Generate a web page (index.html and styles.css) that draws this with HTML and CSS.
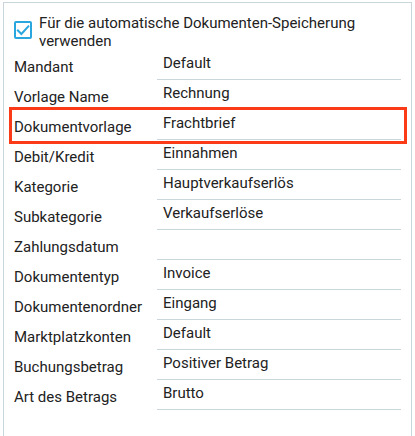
FILE: index.html
```html
<!DOCTYPE html>
<html lang="de">
<head>
<meta charset="utf-8">
<link rel="stylesheet" href="styles.css">
</head>
<body>
<div class="panel">
  <div class="check-row">
    <span class="checkbox">
      <svg width="14" height="14" viewBox="0 0 14 14"><path d="M1.2 6.8 L5.4 11 L13 2.6" fill="none" stroke="#2aa6df" stroke-width="2"/></svg>
    </span>
    <span class="check-label">Für die automatische Dokumenten-Speicherung verwenden</span>
  </div>
  <div class="rows">
    <div class="row"><div class="label">Mandant</div><div class="value">Default</div></div>
    <div class="row"><div class="label">Vorlage Name</div><div class="value">Rechnung</div></div>
    <div class="row highlighted"><div class="label">Dokumentvorlage</div><div class="value">Frachtbrief</div><div class="mark"></div></div>
    <div class="row"><div class="label">Debit/Kredit</div><div class="value">Einnahmen</div></div>
    <div class="row"><div class="label">Kategorie</div><div class="value">Hauptverkaufserlös</div></div>
    <div class="row"><div class="label">Subkategorie</div><div class="value">Verkaufserlöse</div></div>
    <div class="row"><div class="label">Zahlungsdatum</div><div class="value"></div></div>
    <div class="row"><div class="label">Dokumententyp</div><div class="value">Invoice</div></div>
    <div class="row"><div class="label">Dokumentenordner</div><div class="value">Eingang</div></div>
    <div class="row"><div class="label">Marktplatzkonten</div><div class="value">Default</div></div>
    <div class="row"><div class="label">Buchungsbetrag</div><div class="value">Positiver Betrag</div></div>
    <div class="row"><div class="label">Art des Betrags</div><div class="value">Brutto</div></div>
  </div>
</div>
</body>
</html>
```

FILE: styles.css
```css
html, body {
  margin: 0;
  padding: 0;
  background: #ffffff;
}
html {
  overflow: hidden;
}
body {
  font-family: Roboto, "Liberation Sans", sans-serif;
  font-size: 15px;
  color: #222222;
}
.panel {
  margin: 2px 0 0 3px;
  width: 409px;
  height: 450px;
  border: 1px solid #c9d7dd;
  padding: 11px 10px 0 10px;
  box-sizing: border-box;
}
.check-row {
  display: flex;
  align-items: flex-start;
  gap: 7px;
}
.checkbox {
  flex: 0 0 auto;
  width: 18px;
  height: 18px;
  margin-top: 7px;
  border: 2px solid #2aa6df;
  border-radius: 2px;
  box-sizing: border-box;
  display: flex;
  align-items: center;
  justify-content: center;
}
.checkbox svg {
  display: block;
}
.check-label {
  line-height: 18px;
  width: 340px;
}
.rows {
  display: flex;
  flex-direction: column;
}
.row {
  position: relative;
  display: grid;
  grid-template-columns: 143px 244px;
  height: 30px;
}
.label {
  line-height: 20px;
  padding-top: 7px;
  white-space: nowrap;
}
.value {
  line-height: 20px;
  padding: 3px 0 0 6px;
  border-bottom: 1px solid #c9d7dd;
  box-sizing: border-box;
  height: 30px;
}
.mark {
  position: absolute;
  left: -5px;
  top: -3px;
  width: 398px;
  height: 37px;
  border: 3px solid #fb3a17;
  box-sizing: border-box;
  pointer-events: none;
}
```
